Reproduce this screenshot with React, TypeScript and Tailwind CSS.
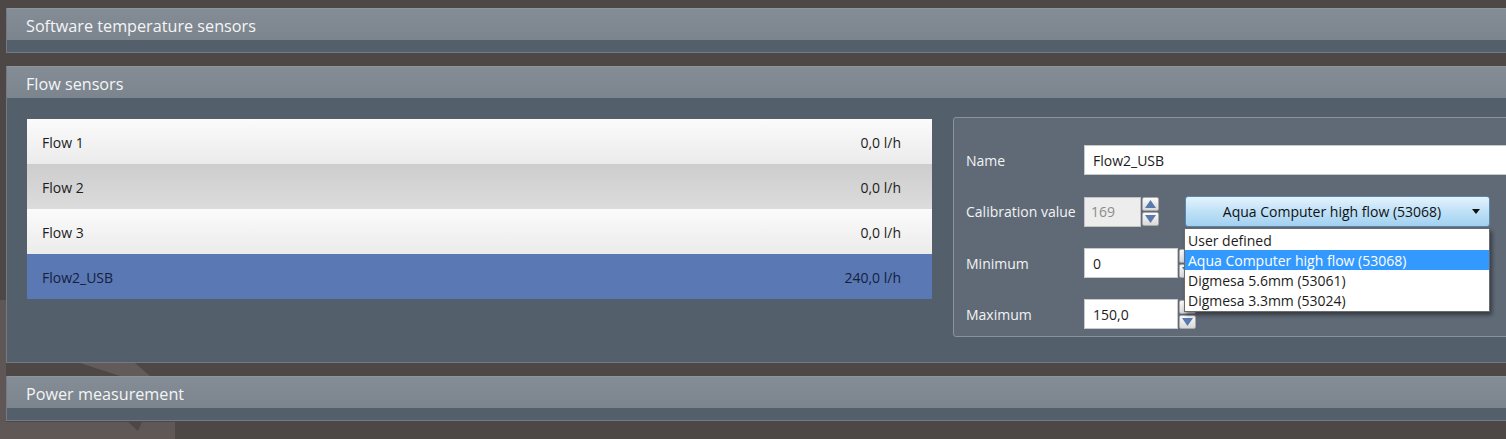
import React from "react";

const font = { fontFamily: '"Open Sans", "Noto Sans", "Liberation Sans", sans-serif' };

function SectionHeader({ title }: { title: string }) {
  return (
    <div className="h-[32px] flex items-center pl-[19px] pt-[3px] bg-gradient-to-b from-[#848c95] to-[#7c858e] border-t border-[#8d949b] text-[#f4f5f6] text-[16.2px]">
      {title}
    </div>
  );
}

function Spinner({ hideUp }: { hideUp?: boolean }) {
  const btn = "w-[17px] h-[14px] rounded-[2px] border border-[#a7a9ab] bg-gradient-to-b from-[#fbfbfb] to-[#d9d9d9] flex items-center justify-center";
  return (
    <div className="flex flex-col gap-[1px] ml-[1px] shrink-0">
      <div className={btn}>
        {!hideUp && (
          <svg width="11" height="8" viewBox="0 0 11 8"><path d="M5.5 0 L11 8 L0 8 Z" fill="#5a79ad" /></svg>
        )}
      </div>
      <div className={btn}>
        <svg width="11" height="8" viewBox="0 0 11 8"><path d="M0 0 L11 0 L5.5 8 Z" fill="#5a79ad" /></svg>
      </div>
    </div>
  );
}

export default function App() {
  const rows = [
    { name: "Flow 1", value: "0,0 l/h", cls: "bg-gradient-to-b from-[#fbfbfb] to-[#ebebeb] text-[#1c1c1c]" },
    { name: "Flow 2", value: "0,0 l/h", cls: "bg-gradient-to-b from-[#cdcdcd] to-[#dcdcdc] text-[#1c1c1c]" },
    { name: "Flow 3", value: "0,0 l/h", cls: "bg-gradient-to-b from-[#fbfbfb] to-[#ebebeb] text-[#1c1c1c]" },
    { name: "Flow2_USB", value: "240,0 l/h", cls: "bg-[#5a78b4] text-[#14213d]" },
  ];
  const options = ["User defined", "Aqua Computer high flow (53068)", "Digmesa 5.6mm (53061)", "Digmesa 3.3mm (53024)"];

  return (
    <div className="relative w-[1506px] h-[439px] overflow-hidden bg-[#4d4846]" style={font}>
      <svg className="absolute left-0 top-0 pointer-events-none" width="1506" height="439">
        <path d="M0 300 L6 300 L6 439 L0 439 Z" fill="#5e5755" />
        <path d="M80 363 L135 363 L150 376 L120 376 Z" fill="#625b59" />
        <path d="M0 422 L175 422 L175 439 L0 439 Z" fill="#5f5856" />
        <path d="M128 422 L142 422 L138 431 Z" fill="#4d4846" />
      </svg>
      <div className="relative flex flex-col gap-[13px] pt-[8px] pl-[6px]">
        <div className="border-l border-b border-[#737a82]">
          <SectionHeader title="Software temperature sensors" />
          <div className="h-[12px] bg-[#535f6b]" />
        </div>

        <div className="border-l border-b border-[#737a82]">
          <SectionHeader title="Flow sensors" />
          <div className="h-[264px] bg-[#535f6b] flex items-start pl-[20px] pt-[21px] gap-[21px]">
            <div className="w-[905px] shrink-0 flex flex-col">
              {rows.map((r) => (
                <div key={r.name} className={`h-[45px] flex items-center justify-between pl-[15px] pr-[31px] pt-[2px] text-[14px] ${r.cls}`}>
                  <span>{r.name}</span>
                  <span>{r.value}</span>
                </div>
              ))}
            </div>
            <div className="relative flex-1 h-[220px] -mt-[2px] rounded-[3px] border border-[#8a939d] bg-[#5f6a76] pl-[12px] pt-[27px] flex flex-col gap-[21px] text-[#f2f3f4] text-[14px]">
              <div className="h-[30px] flex items-center">
                <div className="w-[118px] shrink-0">Name</div>
                <div className="w-[440px] shrink-0 h-[30px] bg-white border border-[#c8cbce] flex items-center pl-[8px] text-[#1c1c1c]">Flow2_USB</div>
              </div>
              <div className="h-[31px] flex items-center">
                <div className="w-[118px] shrink-0">Calibration value</div>
                <div className="w-[57px] shrink-0 h-[30px] bg-[#ededed] border border-[#c3c3c3] flex items-center pl-[6px] text-[#8c8c8c]">169</div>
                <Spinner />
                <div className="relative ml-[26px] shrink-0">
                  <div className="w-[305px] h-[31px] rounded-[3px] border border-[#5b86ab] bg-gradient-to-b from-[#e4f3fd] via-[#bfe1f7] to-[#a2d1f1] flex items-center text-[#111]">
                    <span className="flex-1 text-center pl-[6px]">Aqua Computer high flow (53068)</span>
                    <svg className="mr-[9px]" width="8" height="5" viewBox="0 0 8 5"><path d="M0 0 L8 0 L4 5 Z" fill="#111" /></svg>
                  </div>
                  <div className="absolute left-[-1px] top-[32px] z-10 w-[306px] bg-white border border-[#6b6b6b] shadow-[2px_3px_4px_rgba(0,0,0,0.45)] text-[#1c1c1c] py-[1px]">
                    {options.map((o, i) => (
                      <div key={o} className={`h-[20px] flex items-center pl-[3px] ${i === 1 ? "bg-[#3399ff] text-white" : ""}`}>{o}</div>
                    ))}
                  </div>
                </div>
              </div>
              <div className="h-[30px] flex items-center">
                <div className="w-[118px] shrink-0">Minimum</div>
                <div className="w-[94px] shrink-0 h-[30px] bg-white border border-[#c8cbce] flex items-center pl-[8px] text-[#1c1c1c]">0</div>
                <Spinner hideUp />
              </div>
              <div className="h-[30px] flex items-center">
                <div className="w-[118px] shrink-0">Maximum</div>
                <div className="w-[94px] shrink-0 h-[30px] bg-white border border-[#c8cbce] flex items-center pl-[8px] text-[#1c1c1c]">150,0</div>
                <Spinner hideUp />
              </div>
            </div>
          </div>
        </div>

        <div className="border-l border-b border-[#737a82]">
          <SectionHeader title="Power measurement" />
          <div className="h-[12px] bg-[#535f6b]" />
        </div>
      </div>
    </div>
  );
}
